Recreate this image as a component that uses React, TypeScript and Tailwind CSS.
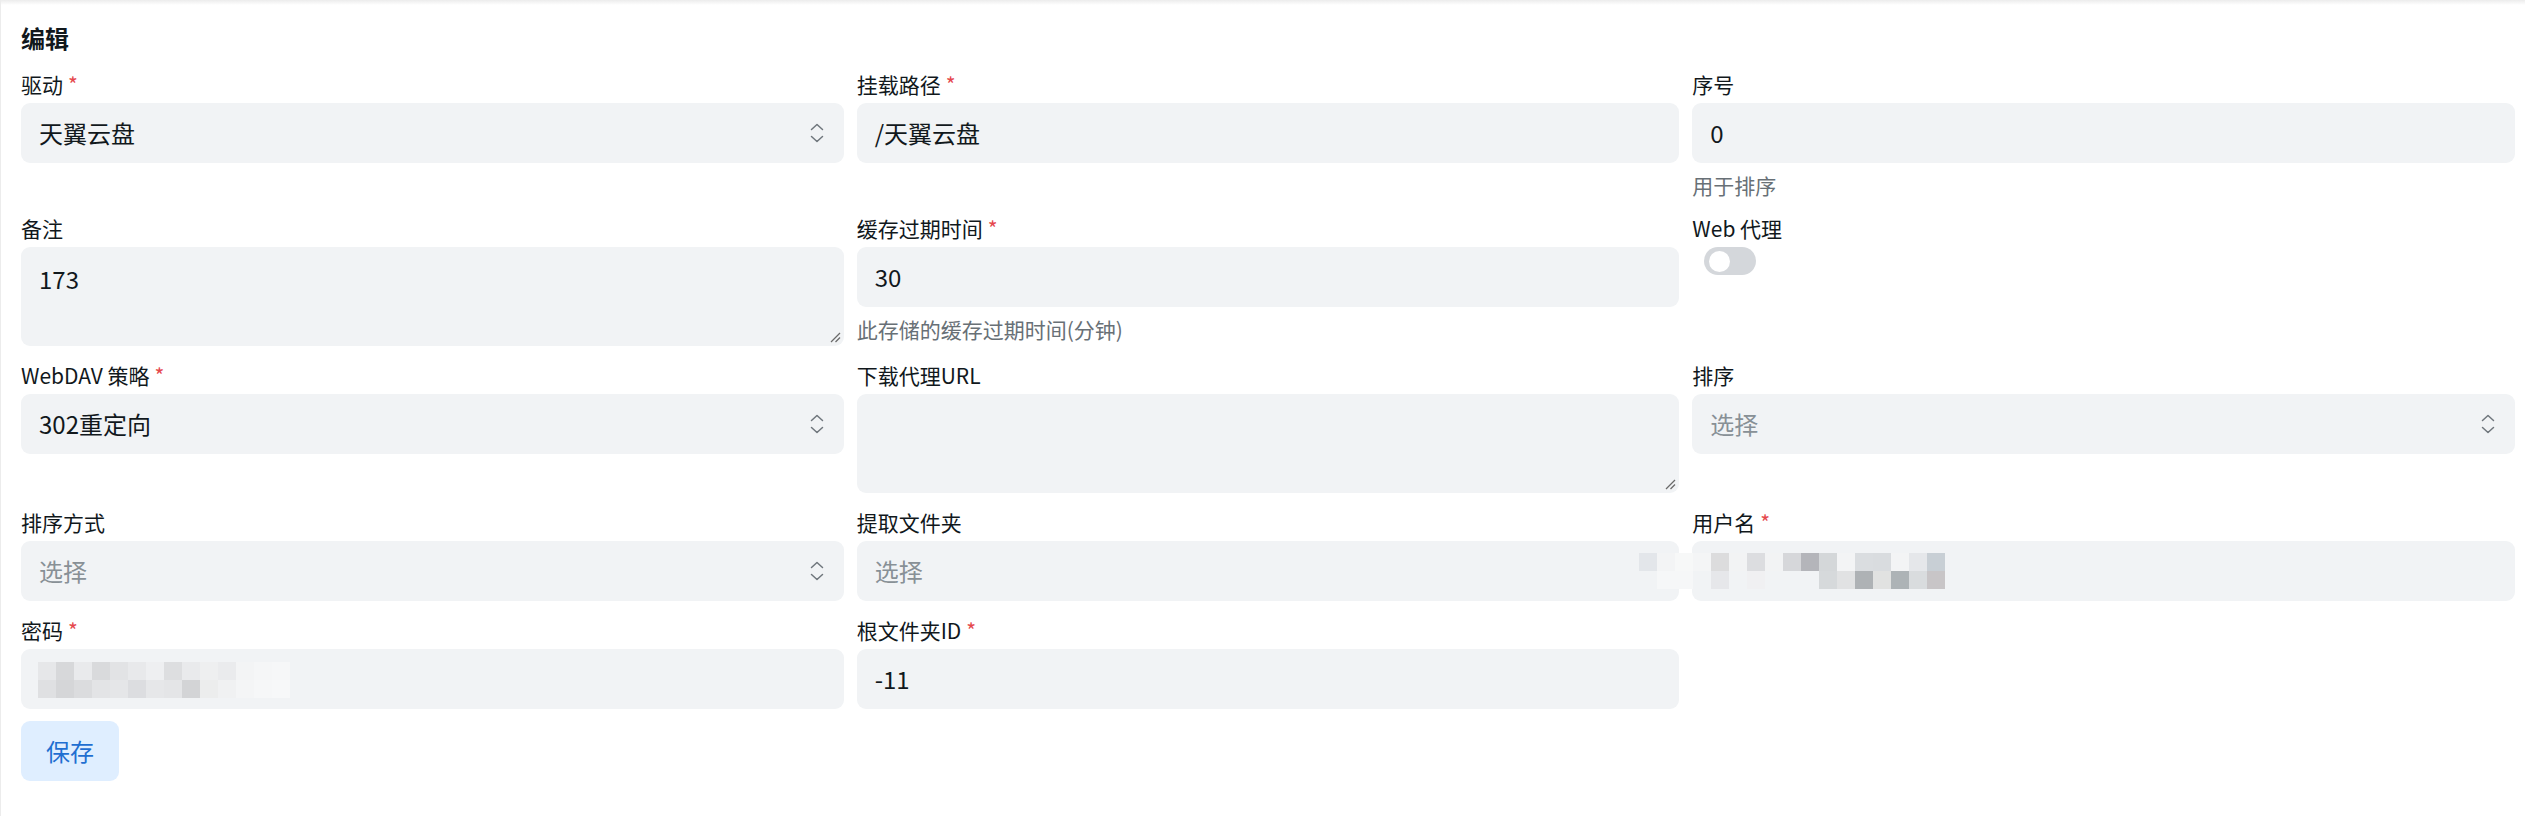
import React from "react";

const userCells: string[][] = [
  [
    "bg-[#e3e6ea]", "bg-[#f3f4f5]", "bg-[#f7f8f8]", "bg-[#f4f5f6]", "bg-[#dcdcdd]", "bg-[#f2f3f4]",
    "bg-[#dcdde0]", "bg-[#f2f3f4]", "bg-[#d6d7da]", "bg-[#b4b5ba]", "bg-[#d4d7d9]", "bg-[#f3f4f5]",
    "bg-[#dadde0]", "bg-[#d9dcdf]", "bg-[#f3f4f5]", "bg-[#e5e7ea]", "bg-[#c8cfd5]",
  ],
  [
    "bg-transparent", "bg-[#f6f7f8]", "bg-[#f6f7f8]", "bg-transparent", "bg-[#e6e7ea]", "bg-transparent",
    "bg-[#f0f0f2]", "bg-transparent", "bg-transparent", "bg-transparent", "bg-[#d6d9db]", "bg-[#e1e2e3]",
    "bg-[#aeb2b5]", "bg-[#e1e2e1]", "bg-[#adb3b6]", "bg-[#d9dcde]", "bg-[#c8c5c7]",
  ],
];

const passCells: string[][] = [
  [
    "bg-[#e6e7e9]", "bg-[#d7d8da]", "bg-[#e9eaec]", "bg-[#d9dadc]", "bg-[#e2e3e5]", "bg-[#e8e9eb]",
    "bg-[#eeeff1]", "bg-[#dddee0]", "bg-[#e9eaec]", "bg-[#eeeff0]", "bg-[#eaebed]", "bg-[#f3f4f5]",
    "bg-[#f5f6f7]", "bg-[#f6f7f8]",
  ],
  [
    "bg-[#dfe0e2]", "bg-[#d5d6d8]", "bg-[#dbdcde]", "bg-[#e3e4e6]", "bg-[#e5e6e8]", "bg-[#dcdde0]",
    "bg-[#e6e7e9]", "bg-[#e4e5e7]", "bg-[#d3d4d6]", "bg-[#eceded]", "bg-[#f0f1f2]", "bg-[#f4f5f6]",
    "bg-[#f6f7f8]", "bg-[#f7f8f9]",
  ],
];

const Mosaic: React.FC<{ rows: string[][]; className: string }> = ({ rows, className }) => (
  <div className={`absolute flex flex-col ${className}`}>
    {rows.map((row, r) => (
      <div key={r} className="flex">
        {row.map((c, i) => (
          <div key={i} className={`w-[18px] h-[18px] ${c}`} />
        ))}
      </div>
    ))}
  </div>
);

const Label: React.FC<{ text: string; required?: boolean }> = ({ text, required }) => (
  <div className="h-[30px] text-[21px] leading-[30px] text-[#11181c] mb-[4px]">
    {text}
    {required && <span className="text-[#e5484d] ml-[5px]">*</span>}
  </div>
);

const Helper: React.FC<{ text: string }> = ({ text }) => (
  <div className="text-[21px] leading-[28px] text-[#687076] mt-[8px]">{text}</div>
);

const Chevrons = () => (
  <svg width="14" height="20" viewBox="0 0 14 20" fill="none" stroke="#6f767c" strokeWidth="1.5" strokeLinecap="round" strokeLinejoin="round">
    <path d="M1.5 6.5 L7 1.5 L12.5 6.5" />
    <path d="M1.5 13.5 L7 18.5 L12.5 13.5" />
  </svg>
);

const Box: React.FC<{ value?: string; placeholder?: string; select?: boolean }> = ({ value, placeholder, select }) => (
  <div className="h-[60px] rounded-[9px] bg-[#f1f3f5] pl-[18px] pr-[20px] flex items-center justify-between text-[24px]">
    {value ? (
      <span className="text-[#11181c]">{value}</span>
    ) : (
      <span className="text-[#889096]">{placeholder}</span>
    )}
    {select && <Chevrons />}
  </div>
);

const TextArea: React.FC<{ value?: string }> = ({ value }) => (
  <div className="relative h-[99px] rounded-[9px] bg-[#f1f3f5] px-[18px] pt-[14px] text-[24px] leading-[36px] text-[#11181c]">
    {value}
    <svg className="absolute right-[3px] bottom-[3px]" width="11" height="11" viewBox="0 0 11 11" stroke="#6a6a6a" strokeWidth="1.2">
      <line x1="10" y1="1" x2="1" y2="10" />
      <line x1="10" y1="5.5" x2="5.5" y2="10" />
    </svg>
  </div>
);

const Switch = () => (
  <div className="mt-[3px] ml-[12px] w-[52px] h-[28px] rounded-full bg-[#d4d7db] flex items-center pl-[5px]">
    <div className="w-[21px] h-[21px] rounded-full bg-white" />
  </div>
);

export default function App() {
  return (
    <div className="relative w-full min-h-[816px] bg-white border-l border-[#ececec] font-['Noto_Sans_CJK_SC',sans-serif]">
      <div className="h-[5px] bg-linear-to-b from-[#ececec] to-white" />
      <div className="pl-[20px] pr-[10px] pt-[15px]">
        <h2 className="text-[24px] leading-[36px] font-bold text-[#11181c] mb-[13px]">编辑</h2>
        <div className="grid grid-cols-3 gap-x-[13px] gap-y-[14px] items-start">
          <div>
            <Label text="驱动" required />
            <Box value="天翼云盘" select />
          </div>
          <div>
            <Label text="挂载路径" required />
            <Box value="/天翼云盘" />
          </div>
          <div>
            <Label text="序号" />
            <Box value="0" />
            <Helper text="用于排序" />
          </div>

          <div>
            <Label text="备注" />
            <TextArea value="173" />
          </div>
          <div>
            <Label text="缓存过期时间" required />
            <Box value="30" />
            <Helper text="此存储的缓存过期时间(分钟)" />
          </div>
          <div>
            <Label text="Web 代理" />
            <Switch />
          </div>

          <div>
            <Label text="WebDAV 策略" required />
            <Box value="302重定向" select />
          </div>
          <div>
            <Label text="下载代理URL" />
            <TextArea />
          </div>
          <div>
            <Label text="排序" />
            <Box placeholder="选择" select />
          </div>

          <div>
            <Label text="排序方式" />
            <Box placeholder="选择" select />
          </div>
          <div>
            <Label text="提取文件夹" />
            <Box placeholder="选择" />
          </div>
          <div>
            <Label text="用户名" required />
            <Box />
          </div>

          <div>
            <Label text="密码" required />
            <Box />
          </div>
          <div>
            <Label text="根文件夹ID" required />
            <Box value="-11" />
          </div>
        </div>
        <button className="mt-[12px] h-[60px] px-[25px] rounded-[9px] bg-[#dfeeff] text-[#1f6fd1] text-[24px]">
          保存
        </button>
      </div>
      <Mosaic rows={userCells} className="left-[1638px] top-[553px]" />
      <Mosaic rows={passCells} className="left-[37px] top-[662px]" />
    </div>
  );
}
